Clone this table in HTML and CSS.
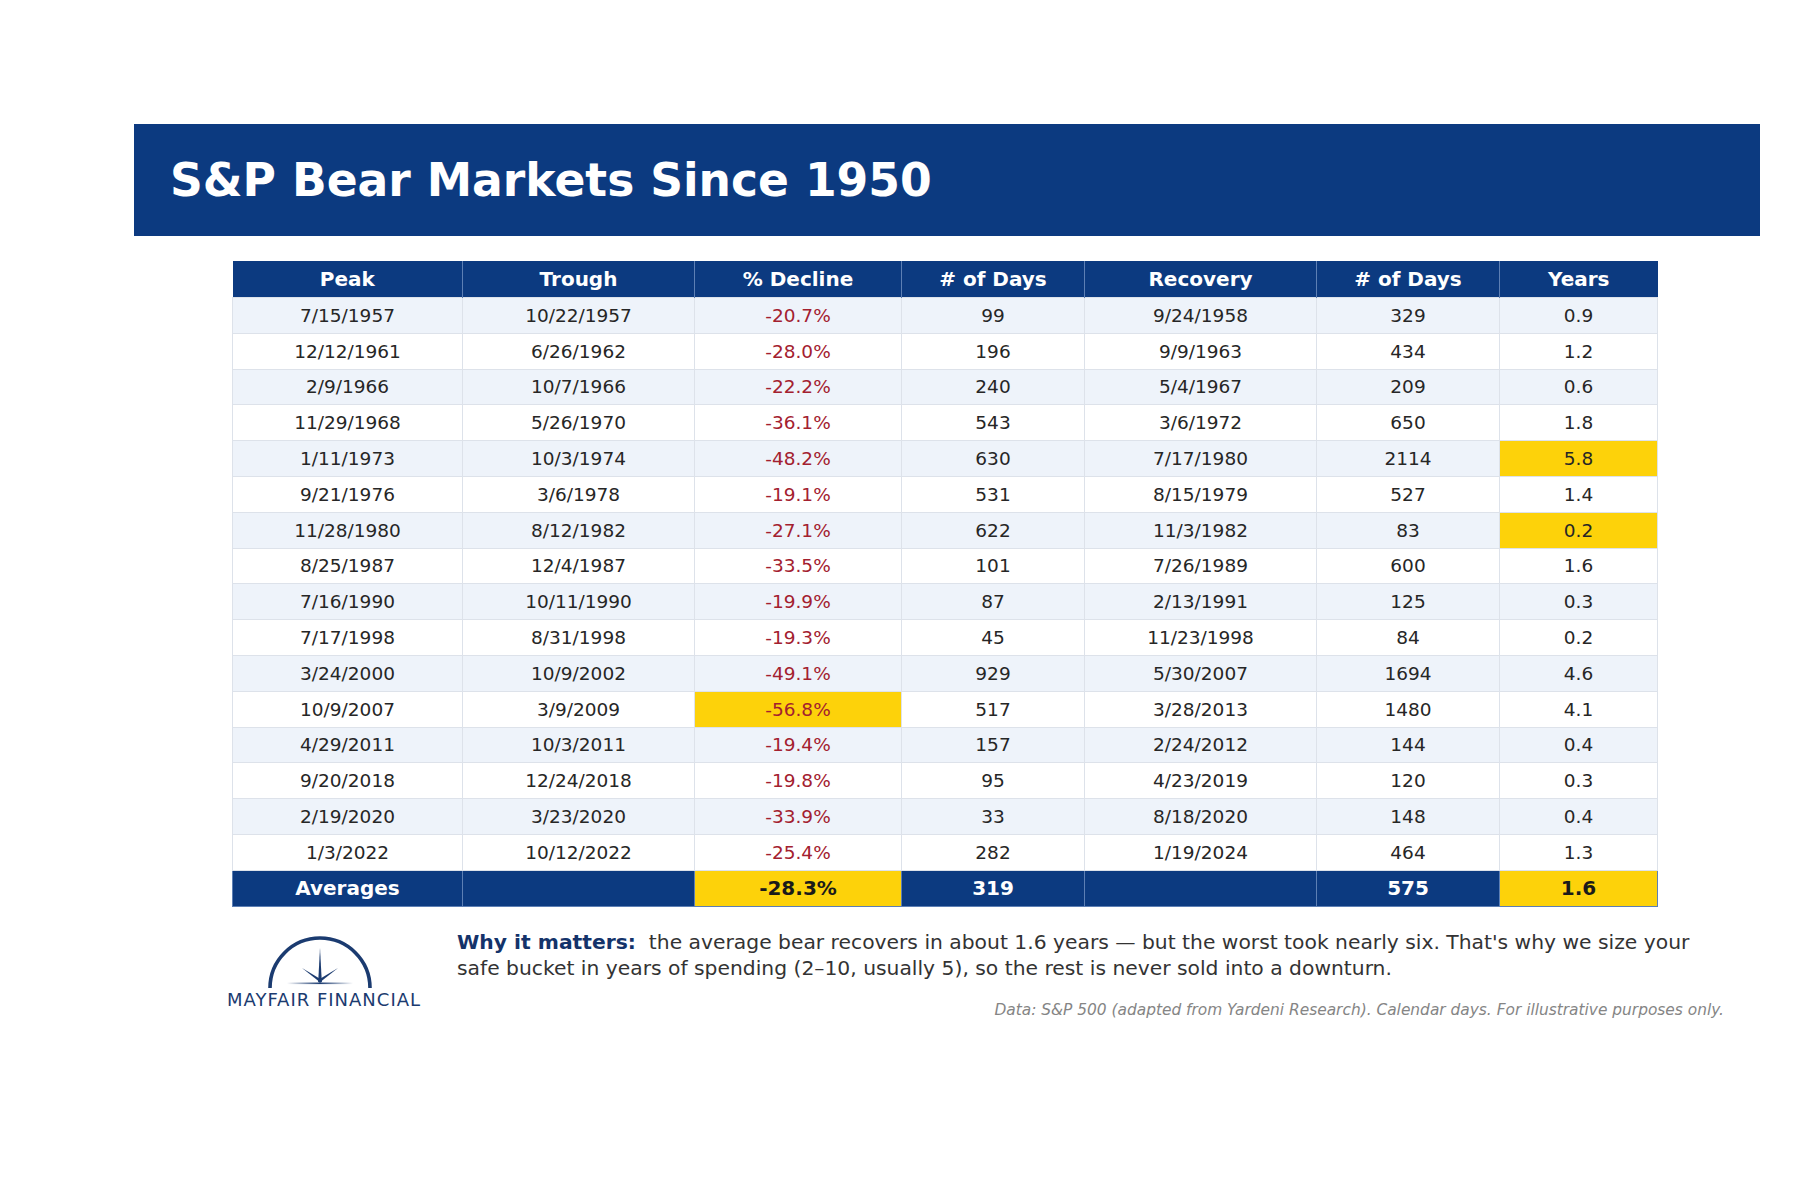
FILE: index.html
```html
<!DOCTYPE html>
<html lang="en">
<head>
<meta charset="utf-8">
<title>S&amp;P Bear Markets Since 1950</title>
<link rel="stylesheet" href="styles.css">
</head>
<body>
<div class="page">
  <header class="banner">
    <h1 class="title">S&amp;P Bear Markets Since 1950</h1>
  </header>

  <table class="bear">
    <colgroup>
      <col class="c-first"><col class="c-date"><col class="c-pct"><col class="c-days">
      <col class="c-date"><col class="c-days"><col class="c-years">
    </colgroup>
    <thead>
      <tr><th>Peak</th><th>Trough</th><th>% Decline</th><th># of Days</th><th>Recovery</th><th># of Days</th><th>Years</th></tr>
    </thead>
    <tbody>
      <tr><td>7/15/1957</td><td>10/22/1957</td><td class="neg">-20.7%</td><td>99</td><td>9/24/1958</td><td>329</td><td>0.9</td></tr>
      <tr><td>12/12/1961</td><td>6/26/1962</td><td class="neg">-28.0%</td><td>196</td><td>9/9/1963</td><td>434</td><td>1.2</td></tr>
      <tr><td>2/9/1966</td><td>10/7/1966</td><td class="neg">-22.2%</td><td>240</td><td>5/4/1967</td><td>209</td><td>0.6</td></tr>
      <tr><td>11/29/1968</td><td>5/26/1970</td><td class="neg">-36.1%</td><td>543</td><td>3/6/1972</td><td>650</td><td>1.8</td></tr>
      <tr><td>1/11/1973</td><td>10/3/1974</td><td class="neg">-48.2%</td><td>630</td><td>7/17/1980</td><td>2114</td><td class="hl">5.8</td></tr>
      <tr><td>9/21/1976</td><td>3/6/1978</td><td class="neg">-19.1%</td><td>531</td><td>8/15/1979</td><td>527</td><td>1.4</td></tr>
      <tr><td>11/28/1980</td><td>8/12/1982</td><td class="neg">-27.1%</td><td>622</td><td>11/3/1982</td><td>83</td><td class="hl">0.2</td></tr>
      <tr><td>8/25/1987</td><td>12/4/1987</td><td class="neg">-33.5%</td><td>101</td><td>7/26/1989</td><td>600</td><td>1.6</td></tr>
      <tr><td>7/16/1990</td><td>10/11/1990</td><td class="neg">-19.9%</td><td>87</td><td>2/13/1991</td><td>125</td><td>0.3</td></tr>
      <tr><td>7/17/1998</td><td>8/31/1998</td><td class="neg">-19.3%</td><td>45</td><td>11/23/1998</td><td>84</td><td>0.2</td></tr>
      <tr><td>3/24/2000</td><td>10/9/2002</td><td class="neg">-49.1%</td><td>929</td><td>5/30/2007</td><td>1694</td><td>4.6</td></tr>
      <tr><td>10/9/2007</td><td>3/9/2009</td><td class="neg hl">-56.8%</td><td>517</td><td>3/28/2013</td><td>1480</td><td>4.1</td></tr>
      <tr><td>4/29/2011</td><td>10/3/2011</td><td class="neg">-19.4%</td><td>157</td><td>2/24/2012</td><td>144</td><td>0.4</td></tr>
      <tr><td>9/20/2018</td><td>12/24/2018</td><td class="neg">-19.8%</td><td>95</td><td>4/23/2019</td><td>120</td><td>0.3</td></tr>
      <tr><td>2/19/2020</td><td>3/23/2020</td><td class="neg">-33.9%</td><td>33</td><td>8/18/2020</td><td>148</td><td>0.4</td></tr>
      <tr><td>1/3/2022</td><td>10/12/2022</td><td class="neg">-25.4%</td><td>282</td><td>1/19/2024</td><td>464</td><td>1.3</td></tr>
    </tbody>
    <tfoot>
      <tr><td>Averages</td><td></td><td class="hl">-28.3%</td><td>319</td><td></td><td>575</td><td class="hl">1.6</td></tr>
    </tfoot>
  </table>

  <footer class="foot">
    <div class="logo">
      <svg class="logo-mark" width="112" height="58" viewBox="0 0 112 58" aria-hidden="true">
        <defs>
          <linearGradient id="baseFade" x1="0" x2="1" y1="0" y2="0">
            <stop offset="0" stop-color="#1b3b70" stop-opacity="0"/>
            <stop offset="0.5" stop-color="#1b3b70" stop-opacity="1"/>
            <stop offset="1" stop-color="#1b3b70" stop-opacity="0"/>
          </linearGradient>
        </defs>
        <path d="M6 57 A50 50 0 0 1 106 57" fill="none" stroke="#1b3b70" stroke-width="3.6"/>
        <path d="M54.2 51 L56 17 L57.8 51 Z" fill="#1b3b70"/>
        <path d="M57 52 L38 37 L58 49 Z" fill="#1b3b70"/>
        <path d="M55 52 L74 37 L54 49 Z" fill="#1b3b70"/>
        <rect x="23" y="51.5" width="66" height="1.6" fill="url(#baseFade)"/>
      </svg>
      <div class="logo-text">MAYFAIR FINANCIAL</div>
    </div>
    <div class="note">
      <p class="why">
        <span class="why-line"><strong>Why it matters:</strong>&nbsp; the average bear recovers in about 1.6 years — but the worst took nearly six. That's why we size your</span>
        <span class="why-line">safe bucket in years of spending (2–10, usually 5), so the rest is never sold into a downturn.</span>
      </p>
      <p class="source">Data: S&amp;P 500 (adapted from Yardeni Research). Calendar days. For illustrative purposes only.</p>
    </div>
  </footer>
</div>
</body>
</html>
```
FILE: styles.css
```css
html, body {
  margin: 0;
  padding: 0;
  background: #ffffff;
}

body {
  font-family: "DejaVu Sans", Verdana, sans-serif;
  color: #222;
}

.page {
  width: 1626px;
  margin-left: 134px;
  padding-top: 124px;
}

.banner {
  height: 112px;
  background: #0c3a80;
  display: flex;
  align-items: center;
  padding-left: 36px;
}

.title {
  margin: 0;
  color: #ffffff;
  font-size: 45.6px;
  font-weight: bold;
}

.bear {
  width: 1425px;
  margin: 25px 0 0 98px;
  table-layout: fixed;
  border-collapse: collapse;
  font-size: 18.5px;
  text-align: center;
}

.c-first { width: 230px; }
.c-date { width: 232px; }
.c-pct { width: 207px; }
.c-days { width: 183px; }
.c-years { width: 158px; }

.bear th {
  height: 36px;
  padding: 0;
  background: #0c3a80;
  color: #fff;
  font-weight: bold;
  font-size: 20px;
  border-left: 1px solid #5d7fb4;
}
.bear th:first-child { border-left: none; }

.bear td {
  height: 34.8px;
  padding: 0;
  border: 1px solid #dde2ea;
  color: #262626;
}

.bear tbody tr:nth-child(odd) td { background: #eef3fa; }
.bear tbody tr:nth-child(even) td { background: #ffffff; }

.bear td.neg { color: #a3202f; }
.bear tbody tr > td.hl { background: #fdd20a; }

.bear tfoot td {
  height: 35px;
  background: #0c3a80;
  color: #fff;
  font-weight: bold;
  font-size: 20px;
  border: 1px solid #5d7fb4;
  border-top: none;
}
.bear tfoot tr > td.hl {
  background: #fdd20a;
  color: #1a1a1a;
}

.foot {
  display: flex;
  align-items: flex-start;
  margin-top: 22px;
  padding-left: 90px;
  gap: 33px;
}

.logo {
  width: 200px;
  display: flex;
  flex-direction: column;
  align-items: center;
  padding-top: 2px;
}

.logo-mark {
  display: block;
  margin-right: 9px;
}

.logo-text {
  font-size: 18px;
  letter-spacing: 1px;
  color: #1b3b70;
  white-space: nowrap;
}

.note {
  width: 1267px;
}

.why {
  margin: 0;
  font-size: 20.3px;
  line-height: 26px;
  color: #333;
}

.why-line {
  display: block;
  white-space: nowrap;
}

.why strong {
  color: #14336a;
}

.source {
  margin: 20px 0 0;
  text-align: right;
  font-size: 15.4px;
  font-style: italic;
  color: #858585;
}
```
